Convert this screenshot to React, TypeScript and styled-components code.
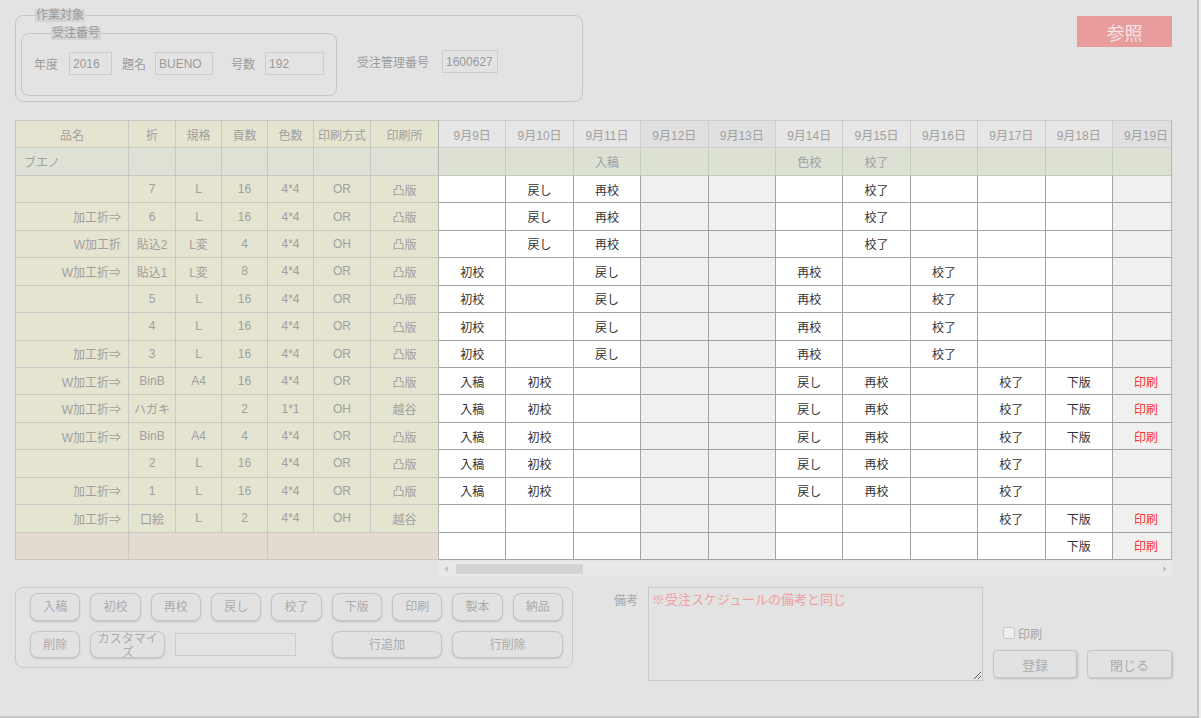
import React from 'react';
import styled, { createGlobalStyle } from 'styled-components';

const GlobalStyle = createGlobalStyle`
  html, body { margin: 0; padding: 0; background: #eeeeee; }
  body { font-family: "Liberation Sans", "Noto Sans CJK JP", sans-serif; font-size: 12px; }
  * { box-sizing: border-box; }
`;

const FONT = `"Liberation Sans", "Noto Sans CJK JP", sans-serif`;

const Page = styled.div`
  width: 1199px;
  height: 718px;
  background: #e3e3e3;
  border-right: 2px solid #c6c6c6;
  border-bottom: 2px solid #c6c6c6;
  padding: 9px 25px 0 15px;
  display: flex;
  flex-direction: column;
`;

const TopRow = styled.div`
  display: flex;
  justify-content: space-between;
  align-items: flex-start;
`;

const OuterFieldset = styled.fieldset`
  margin: 0;
  width: 568px;
  min-inline-size: auto;
  border: 1px solid #c6c6c6;
  border-radius: 8px;
  padding: 5px 0 5px 5px;
  display: flex;
  align-items: center;
`;

const InnerFieldset = styled.fieldset`
  margin: 0;
  width: 316px;
  min-inline-size: auto;
  border: 1px solid #c6c6c6;
  border-radius: 8px;
  padding: 12px 0 20px 12px;
  display: flex;
  align-items: center;
`;

const Legend = styled.legend<{ $offset: number }>`
  margin-left: ${(p) => p.$offset}px;
  padding: 0 1px;
  background: #d4d4d4;
  color: #9a9a9a;
  font-size: 12px;
  line-height: 13px;
`;

const FieldLabel = styled.span<{ $gap: number; $lead?: number }>`
  color: #9b9b9b;
  font-size: 12px;
  margin-left: ${(p) => p.$lead ?? 0}px;
  margin-right: ${(p) => p.$gap}px;
  white-space: nowrap;
`;

const FieldInput = styled.input<{ $w: number }>`
  width: ${(p) => p.$w}px;
  height: 23px;
  border: 1px solid #cdcdcd;
  background: transparent;
  color: #9a9a9a;
  font-family: ${FONT};
  font-size: 12px;
  padding: 0 3px;
  outline: none;
`;

const RefButton = styled.button`
  margin-top: 7px;
  width: 95px;
  height: 31px;
  border: none;
  background: #e89c9c;
  color: #f5e4e4;
  font-family: ${FONT};
  font-size: 18px;
  padding: 0;
`;

const TableArea = styled.div`
  margin-top: 18px;
  display: flex;
  height: 440px;
`;

const LeftGrid = styled.div`
  width: 424px;
  height: 440px;
  display: grid;
  grid-template-columns: 113px 47px 46px 46px 46px 57px 68px;
  grid-template-rows: repeat(16, 1fr);
  border-top: 1px solid #c6c6c2;
  border-left: 1px solid #c6c6c2;
`;

type LeftKind = 'head' | 'group' | 'data' | 'blank';
const leftBg: Record<LeftKind, string> = {
  head: '#e5e4d1',
  group: '#dde2d5',
  data: '#e5e4d1',
  blank: '#e4dbd0',
};

const LCell = styled.div<{ $kind: LeftKind; $align?: 'left' | 'center' | 'right'; $span?: number; $last?: boolean }>`
  display: flex;
  align-items: center;
  justify-content: ${(p) => (p.$align === 'left' ? 'flex-start' : p.$align === 'right' ? 'flex-end' : 'center')};
  padding: ${(p) => (p.$align === 'left' ? '0 0 0 8px' : p.$align === 'right' ? '0 7px 0 0' : '0')};
  background: ${(p) => leftBg[p.$kind]};
  border-right: 1px solid ${(p) => (p.$last ? '#b4b4b4' : '#c8c8c4')};
  border-bottom: 1px solid #c8c8c4;
  color: #a0a0a0;
  font-size: 12px;
  white-space: nowrap;
  ${(p) => (p.$span ? `grid-column: span ${p.$span};` : '')}
`;

const RightScroll = styled.div`
  width: 733px;
  height: 440px;
  overflow: hidden;
  border-top: 1px solid #cdcdcd;
  border-right: 1px solid #b4b4b4;
`;

const RightGrid = styled.div`
  width: ${11 * 67.4}px;
  height: 439px;
  display: grid;
  grid-template-columns: repeat(11, 67.4px);
  grid-template-rows: repeat(16, 1fr);
`;

type RightKind = 'date' | 'group' | 'data';

const rBg = (k: RightKind, off?: boolean) => {
  if (k === 'date') return off ? '#e0e0e0' : '#e6e6e6';
  if (k === 'group') return '#dce1d4';
  return off ? '#f0f0f0' : '#ffffff';
};
const rLine = (k: RightKind) => (k === 'date' ? '#cdcdcd' : k === 'group' ? '#c6cbbf' : '#a3a3a3');

const RCell = styled.div<{ $kind: RightKind; $off?: boolean; $red?: boolean }>`
  display: flex;
  align-items: center;
  justify-content: center;
  background: ${(p) => rBg(p.$kind, p.$off)};
  border-right: 1px solid ${(p) => rLine(p.$kind)};
  border-bottom: 1px solid ${(p) => rLine(p.$kind)};
  color: ${(p) => (p.$red ? '#ff3030' : p.$kind === 'data' ? '#333333' : '#a0a0a0')};
  font-size: 12px;
  white-space: nowrap;
`;

const ScrollBar = styled.div`
  margin: 1px 0 0 424px;
  width: 733px;
  height: 15px;
  background: #e9e9e9;
  display: flex;
  align-items: center;
  padding: 0 5px;
`;

const Arrow = styled.span<{ $dir: 'left' | 'right' }>`
  width: 0;
  height: 0;
  border-top: 3px solid transparent;
  border-bottom: 3px solid transparent;
  ${(p) => (p.$dir === 'left' ? 'border-right: 4px solid #c4c4c4;' : 'border-left: 4px solid #c4c4c4; margin-left: auto;')}
`;

const Thumb = styled.div`
  margin-left: 8px;
  width: 127px;
  height: 10px;
  background: #d3d3d3;
`;

const Bottom = styled.div`
  margin-top: 11px;
  display: flex;
  align-items: flex-start;
`;

const ButtonPanel = styled.div`
  width: 558px;
  border: 1px solid #c9c9c9;
  border-radius: 8px;
  padding: 5px 9px 9px 14px;
  display: grid;
  grid-template-columns: repeat(9, 1fr);
  grid-template-rows: 28px 27px;
  column-gap: 10px;
  row-gap: 10px;
`;

const ActionButton = styled.button<{ $span?: number; $w?: number }>`
  ${(p) => (p.$span ? `grid-column: span ${p.$span};` : '')}
  ${(p) => (p.$w ? `width: ${p.$w}px; flex: none;` : '')}
  height: 100%;
  border: 1px solid #c6c6c6;
  border-radius: 8px;
  background: #e2e2e2;
  color: #ababab;
  font-family: ${FONT};
  font-size: 12px;
  line-height: 14px;
  padding: 0 6px;
  box-shadow: 0 1px 2px rgba(0, 0, 0, 0.16);
`;

const CustomGroup = styled.div`
  grid-column: span 4;
  display: flex;
  align-items: center;
  gap: 10px;
`;

const CustomInput = styled.input`
  width: 121px;
  height: 23px;
  border: 1px solid #cdcdcd;
  background: transparent;
  outline: none;
`;

const RemarkLabel = styled.span`
  margin: 4px 0 0 41px;
  width: 34px;
  color: #a8a8a8;
  font-size: 12px;
`;

const Remarks = styled.textarea`
  width: 335px;
  height: 94px;
  border: 1px solid #c9c9c9;
  background: transparent;
  color: #f0a0a0;
  font-family: ${FONT};
  font-size: 13px;
  line-height: 16px;
  padding: 4px 3px;
  resize: both;
  outline: none;
`;

const SideColumn = styled.div`
  margin-left: 10px;
  padding-top: 40px;
  display: flex;
  flex-direction: column;
  gap: 11px;
`;

const CheckRow = styled.label`
  display: flex;
  align-items: center;
  padding-left: 10px;
  height: 12px;
  color: #a8a8a8;
  font-size: 12px;
  gap: 3px;
`;

const CheckBox = styled.input`
  margin: 0;
  width: 12px;
  height: 12px;
`;

const SideButtons = styled.div`
  display: flex;
  gap: 10px;
`;

const SideButton = styled.button<{ $w: number }>`
  width: ${(p) => p.$w}px;
  height: 28px;
  border: 1px solid #c6c6c6;
  border-radius: 4px;
  background: #e2e2e2;
  color: #ababab;
  font-family: ${FONT};
  font-size: 13px;
  box-shadow: 1px 1px 2px rgba(0, 0, 0, 0.16);
`;

const headers = ['品名', '折', '規格', '頁数', '色数', '印刷方式', '印刷所'];
const dates = ['9月9日', '9月10日', '9月11日', '9月12日', '9月13日', '9月14日', '9月15日', '9月16日', '9月17日', '9月18日', '9月19日'];
const offCols = [3, 4, 10];

const A = ['', '戻し', '再校', '', '', '', '校了', '', '', '', ''];
const B = ['初校', '', '戻し', '', '', '再校', '', '校了', '', '', ''];
const C = ['入稿', '初校', '', '', '', '戻し', '再校', '', '校了', '下版', '印刷'];
const D = ['入稿', '初校', '', '', '', '戻し', '再校', '', '校了', '', ''];
const E = ['', '', '', '', '', '', '', '', '校了', '下版', '印刷'];
const F = ['', '', '', '', '', '', '', '', '', '下版', '印刷'];

const items: { cols: string[]; plan: string[] }[] = [
  { cols: ['', '7', 'L', '16', '4*4', 'OR', '凸版'], plan: A },
  { cols: ['加工折⇒', '6', 'L', '16', '4*4', 'OR', '凸版'], plan: A },
  { cols: ['W加工折', '貼込2', 'L変', '4', '4*4', 'OH', '凸版'], plan: A },
  { cols: ['W加工折⇒', '貼込1', 'L変', '8', '4*4', 'OR', '凸版'], plan: B },
  { cols: ['', '5', 'L', '16', '4*4', 'OR', '凸版'], plan: B },
  { cols: ['', '4', 'L', '16', '4*4', 'OR', '凸版'], plan: B },
  { cols: ['加工折⇒', '3', 'L', '16', '4*4', 'OR', '凸版'], plan: B },
  { cols: ['W加工折⇒', 'BinB', 'A4', '16', '4*4', 'OR', '凸版'], plan: C },
  { cols: ['W加工折⇒', 'ハガキ', '', '2', '1*1', 'OH', '越谷'], plan: C },
  { cols: ['W加工折⇒', 'BinB', 'A4', '4', '4*4', 'OR', '凸版'], plan: C },
  { cols: ['', '2', 'L', '16', '4*4', 'OR', '凸版'], plan: D },
  { cols: ['加工折⇒', '1', 'L', '16', '4*4', 'OR', '凸版'], plan: D },
  { cols: ['加工折⇒', '口絵', 'L', '2', '4*4', 'OH', '越谷'], plan: E },
];
const groupPlan = ['', '', '入稿', '', '', '色校', '校了', '', '', '', ''];
const stepButtons = ['入稿', '初校', '再校', '戻し', '校了', '下版', '印刷', '製本', '納品'];

export default function App() {
  return (
    <>
      <GlobalStyle />
      <Page>
        <TopRow>
          <OuterFieldset>
            <Legend $offset={14}>作業対象</Legend>
            <InnerFieldset>
              <Legend $offset={17}>受注番号</Legend>
              <FieldLabel $gap={11}>年度</FieldLabel>
              <FieldInput $w={43} readOnly value="2016" />
              <FieldLabel $gap={9} $lead={10}>題名</FieldLabel>
              <FieldInput $w={58} readOnly value="BUENO" />
              <FieldLabel $gap={10} $lead={18}>号数</FieldLabel>
              <FieldInput $w={59} readOnly value="192" />
            </InnerFieldset>
            <FieldLabel $gap={13} $lead={20}>受注管理番号</FieldLabel>
            <FieldInput $w={56} readOnly value="1600627" />
          </OuterFieldset>
          <RefButton>参照</RefButton>
        </TopRow>

        <TableArea>
          <LeftGrid>
            {headers.map((h, i) => (
              <LCell key={`h${i}`} $kind="head" $last={i === 6}>{h}</LCell>
            ))}
            <LCell $kind="group" $align="left">ブエノ</LCell>
            {[1, 2, 3, 4, 5, 6].map((i) => (
              <LCell key={`g${i}`} $kind="group" $last={i === 6} />
            ))}
            {items.map((it, r) =>
              it.cols.map((c, i) => (
                <LCell key={`d${r}-${i}`} $kind="data" $align={i === 0 ? 'right' : 'center'} $last={i === 6}>
                  {c}
                </LCell>
              ))
            )}
            <LCell $kind="blank" />
            <LCell $kind="blank" $span={3} />
            <LCell $kind="blank" $span={3} $last />
          </LeftGrid>

          <RightScroll>
            <RightGrid>
              {dates.map((d, i) => (
                <RCell key={`dt${i}`} $kind="date" $off={offCols.includes(i)}>{d}</RCell>
              ))}
              {groupPlan.map((g, i) => (
                <RCell key={`gp${i}`} $kind="group">{g}</RCell>
              ))}
              {[...items.map((it) => it.plan), F].map((plan, r) =>
                plan.map((v, i) => (
                  <RCell key={`p${r}-${i}`} $kind="data" $off={offCols.includes(i)} $red={v === '印刷'}>
                    {v}
                  </RCell>
                ))
              )}
            </RightGrid>
          </RightScroll>
        </TableArea>

        <ScrollBar>
          <Arrow $dir="left" />
          <Thumb />
          <Arrow $dir="right" />
        </ScrollBar>

        <Bottom>
          <ButtonPanel>
            {stepButtons.map((b) => (
              <ActionButton key={b}>{b}</ActionButton>
            ))}
            <ActionButton>削除</ActionButton>
            <CustomGroup>
              <ActionButton $w={75}>カスタマイズ</ActionButton>
              <CustomInput readOnly />
            </CustomGroup>
            <ActionButton $span={2}>行追加</ActionButton>
            <ActionButton $span={2}>行削除</ActionButton>
          </ButtonPanel>

          <RemarkLabel>備考</RemarkLabel>
          <Remarks readOnly value="※受注スケジュールの備考と同じ" />

          <SideColumn>
            <CheckRow>
              <CheckBox type="checkbox" disabled />
              印刷
            </CheckRow>
            <SideButtons>
              <SideButton $w={84}>登録</SideButton>
              <SideButton $w={85}>閉じる</SideButton>
            </SideButtons>
          </SideColumn>
        </Bottom>
      </Page>
    </>
  );
}
